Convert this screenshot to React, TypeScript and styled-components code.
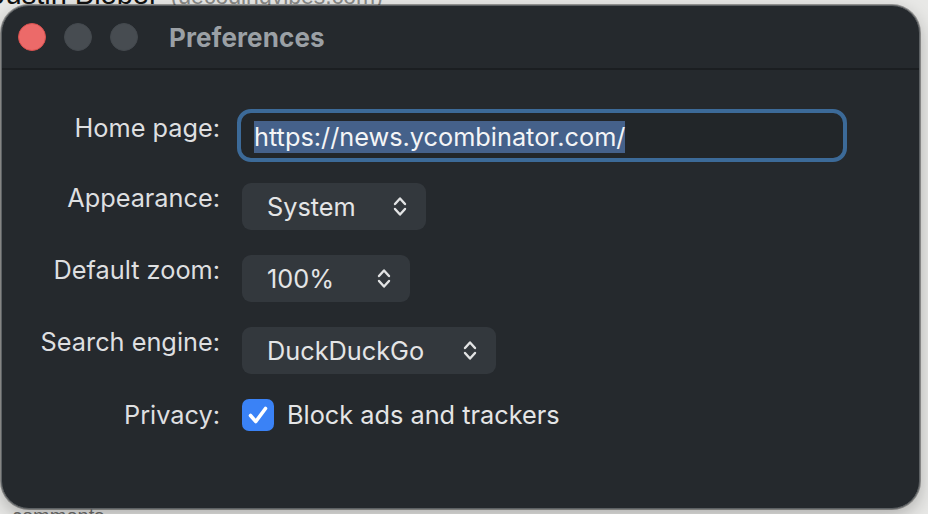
import styled, { createGlobalStyle } from "styled-components";

const GlobalStyle = createGlobalStyle`
  html, body {
    margin: 0;
    padding: 0;
    background: #e8e8e6;
  }
  body {
    font-family: Inter, "Noto Sans", "Liberation Sans", sans-serif;
    -webkit-font-smoothing: antialiased;
  }
`

const Page = styled.div`
  position: relative;
  width: 928px;
  height: 514px;
  overflow: hidden;
  background: #e8e8e6;
  display: flex;
  flex-direction: column;
  justify-content: space-between;
`

const BackHeadline = styled.div`
  margin: -22px 0 0 -9px;
  font-family: "Liberation Sans", sans-serif;
  font-size: 29px;
  line-height: 32px;
  color: #111;
  white-space: nowrap;

  span {
    margin-left: 12px;
    font-size: 23px;
    color: #8a8a88;
  }
`

const BackFooter = styled.div`
  margin: 0 0 -12px 12px;
  font-family: "Liberation Sans", sans-serif;
  font-size: 20px;
  line-height: 20px;
  color: #6e6e6c;
`

const Window = styled.div`
  position: absolute;
  left: 1px;
  top: 5px;
  width: 919px;
  height: 504px;
  box-sizing: border-box;
  background: #25292d;
  border: 1px solid #5d6164;
  border-radius: 28px;
  box-shadow: 0 0 0 1px rgba(0, 0, 0, 0.35), 0 6px 18px rgba(0, 0, 0, 0.25);
  overflow: hidden;
  display: flex;
  flex-direction: column;
`

const TitleBar = styled.div`
  display: flex;
  align-items: center;
  height: 62px;
  padding-left: 16px;
  border-bottom: 2px solid #1b1e21;
`

const Light = styled.span<{ $color: string; $ring: string }>`
  width: 28px;
  height: 28px;
  border-radius: 50%;
  box-sizing: border-box;
  background: ${(p) => p.$color};
  border: 1px solid ${(p) => p.$ring};
  margin-right: 18px;
`

const Title = styled.h1`
  margin: 0 0 0 13px;
  font-size: 26px;
  font-weight: 700;
  color: #9ba0a5;
  letter-spacing: 0.1px;
`

const Form = styled.div`
  display: grid;
  grid-template-columns: 218px auto;
  column-gap: 22px;
  row-gap: 25px;
  padding-top: 43px;
  justify-items: start;
  font-size: 25.3px;
`

const Label = styled.div<{ $center?: boolean }>`
  justify-self: end;
  align-self: ${(p) => (p.$center ? "center" : "start")};
  margin-top: ${(p) => (p.$center ? "0" : "-1px")};
  line-height: 32px;
  color: #dedfe0;
  white-space: nowrap;
`

const Field = styled.div`
  width: 602px;
  height: 45px;
  box-sizing: border-box;
  display: flex;
  align-items: center;
  padding-left: 13px;
  margin-left: -1px;
  background: #222629;
  border-radius: 10px;
  outline: 4px solid #3c6a98;
  outline-offset: 0;
`

const Selected = styled.span`
  background: #45618a;
  color: #f4f5f6;
  line-height: 32px;
  margin-top: 2px;
`

const Select = styled.div<{ $width: number }>`
  width: ${(p) => p.$width}px;
  height: 47px;
  box-sizing: border-box;
  display: flex;
  align-items: center;
  justify-content: space-between;
  padding: 0 19px 0 25px;
  background: #33383d;
  border-radius: 9px;
  color: #e4e5e6;
`

const Chevrons = styled.svg`
  width: 14px;
  height: 21px;
  flex: none;
`

const CheckRow = styled.label`
  display: flex;
  align-items: center;
  gap: 13px;
  line-height: 32px;
  color: #e4e5e6;
`

const CheckBox = styled.span`
  width: 32px;
  height: 32px;
  border-radius: 7px;
  background: #3a82f6;
  display: flex;
  align-items: center;
  justify-content: center;
`

function UpDown() {
  return (
    <Chevrons viewBox="0 0 14 21" fill="none" stroke="#e2e3e4" strokeWidth="2.4" strokeLinecap="round" strokeLinejoin="round">
      <path d="M2 8 L7 2.5 L12 8" />
      <path d="M2 13 L7 18.5 L12 13" />
    </Chevrons>
  )
}

function Popup({ value, width }: { value: string; width: number }) {
  return (
    <Select $width={width}>
      <span>{value}</span>
      <UpDown />
    </Select>
  )
}

export default function App() {
  return (
    <>
      <GlobalStyle />
      <Page>
        <BackHeadline>
          Justin Bieber<span>(decodingvibes.com)</span>
        </BackHeadline>
        <BackFooter>comments</BackFooter>

        <Window>
          <TitleBar>
            <Light $color="#ec6a69" $ring="#d9514f" />
            <Light $color="#474c51" $ring="#44494e" />
            <Light $color="#474c51" $ring="#44494e" />
            <Title>Preferences</Title>
          </TitleBar>

          <Form>
            <Label>Home page:</Label>
            <Field>
              <Selected>https://news.ycombinator.com/</Selected>
            </Field>

            <Label>Appearance:</Label>
            <Popup value="System" width={184} />

            <Label>Default zoom:</Label>
            <Popup value="100%" width={168} />

            <Label>Search engine:</Label>
            <Popup value="DuckDuckGo" width={254} />

            <Label $center>Privacy:</Label>
            <CheckRow>
              <CheckBox>
                <svg width="32" height="32" viewBox="0 0 32 32" fill="none" stroke="#fff" strokeWidth="3.6" strokeLinecap="round" strokeLinejoin="round">
                  <path d="M8.5 16.5 L13.8 22.5 L23.5 9.5" />
                </svg>
              </CheckBox>
              Block ads and trackers
            </CheckRow>
          </Form>
        </Window>
      </Page>
    </>
  )
}
